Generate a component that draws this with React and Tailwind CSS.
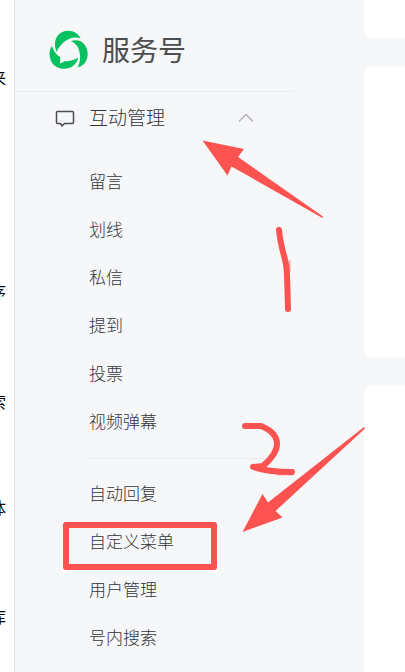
const MESSAGE_TYPES = ["留言", "划线", "私信", "提到", "投票", "视频弹幕"];

const TOOLS = [
  { label: "自动回复" },
  { label: "自定义菜单", marked: true },
  { label: "用户管理" },
  { label: "号内搜索" },
];

function Logo() {
  return (
    <svg viewBox="6 6 120 120" className="w-10 h-10 shrink-0" fill="#07c160" aria-hidden="true">
      <path d="M32 75C18 39 36 11 67 11C84 11 97 20 104 34C84 27 66 34 53 46C42 56 36 65 32 75Z" />
      <path d="M74 43C101 31 125 52 125 80C125 100 115 116 95 121C102 107 104 92 101 78C98 60 90 49 74 43Z" />
      <path d="M18 57C8 69 8 92 18 107C37 134 87 134 97 91C84 100 71 104 57 102L42 110L43 90C31 84 23 73 18 57Z" />
    </svg>
  );
}

function NavItem({ label, marked }) {
  return (
    <li className="relative">
      <a href="#" className="flex items-center h-12 text-[17px] font-light">
        {label}
      </a>
      {marked && (
        <span className="absolute -left-[26px] top-[5px] w-[154px] h-12 border-6 border-[#fc5250] rounded-[3px] pointer-events-none" />
      )}
    </li>
  );
}

// Hand-drawn arrows and step numbers on top of the page
function Annotations() {
  return (
    <svg className="absolute left-0 top-0 w-[405px] h-[672px] pointer-events-none" viewBox="0 0 405 672" aria-hidden="true">
      <g fill="#fc5250">
        <path d="M202.500 140.500L244 149L238 157L323 216.500L322.500 218L231.500 166.500L227.500 175.500Z" />
        <path d="M242.500 532L262.500 494L268 502.500L364 427L365 428.500L275.500 511L282.500 517.500Z" />
      </g>
      <g fill="none" stroke="#fc5250" strokeWidth="6" strokeLinecap="round" strokeLinejoin="round">
        <path d="M279 230C280 241 281 244 283 252C285 260 287 264 287 274L288 309" />
        <path d="M245 426H261C271 430 277 436 277 444C277 452 271 459 263 466L253 467C262 470 275 472 292 472" />
      </g>
      <g fill="none" stroke="#fc5250" strokeOpacity="0.4" strokeWidth="2">
        <path d="M289.500 260V272M276 474.500H293" />
      </g>
    </svg>
  );
}

export default function App() {
  return (
    <div className="relative flex min-h-screen overflow-hidden bg-[#f6f7f9] text-[#343537] font-['Noto_Sans_CJK_SC',sans-serif]">
      <div className="flex flex-col items-end w-[14px] shrink-0 overflow-hidden bg-white pr-2 pt-[65px] text-base leading-6 text-black">
        <p className="mb-[190px]">来</p>
        <p className="mb-[86px]">序</p>
        <p className="mb-[82px]">索</p>
        <p className="mb-[85px]">体</p>
        <p>库</p>
      </div>

      <aside className="w-[280px] shrink-0 border-l border-[#dfe0e2]">
        <header className="flex items-center gap-3.5 h-[92px] pl-[33px] pt-1.5 border-b border-[#ebecee]">
          <Logo />
          <h1 className="text-[28px] leading-10 text-[#4c4d4f]">服务号</h1>
        </header>

        <nav>
          <button type="button" className="flex items-center w-full h-[51px] pl-10 pr-10 text-[19px] font-light" aria-expanded="true">
            <svg viewBox="0 0 20 20" className="w-5 h-5 mr-3.5" fill="none" stroke="#4c4d4f" strokeWidth="1.5" strokeLinejoin="round">
              <path d="M2.500 3.500H17.500Q18.500 3.500 18.500 4.500V14.500Q18.500 15.500 17.500 15.500H9.500L7 18L5.500 15.500H2.500Q1.500 15.500 1.500 14.500V4.500Q1.500 3.500 2.500 3.500Z" />
            </svg>
            互动管理
            <svg viewBox="0 0 16 16" className="w-4 h-4 ml-auto" fill="none" stroke="#b2b3b5" strokeWidth="1.500">
              <path d="M1 11.500L8 4.500L15 11.500" />
            </svg>
          </button>

          <ul className="pt-3.5 pl-[74px]">
            {MESSAGE_TYPES.map((label) => (
              <NavItem key={label} label={label} />
            ))}
          </ul>
          <hr className="mt-[13px] mb-2.5 ml-[70px] mr-[30px] border-[#ebecee]" />
          <ul className="pl-[74px]">
            {TOOLS.map((item) => (
              <NavItem key={item.label} label={item.label} marked={item.marked} />
            ))}
          </ul>
        </nav>
      </aside>

      <main className="flex flex-col flex-1 ml-[70px]">
        <section className="h-[38px] bg-white rounded-bl-lg" />
        <section className="h-[290px] mt-[29px] bg-white rounded-l-lg" />
        <section className="flex-1 mt-7 bg-white rounded-tl-lg" />
      </main>

      <Annotations />
    </div>
  );
}
